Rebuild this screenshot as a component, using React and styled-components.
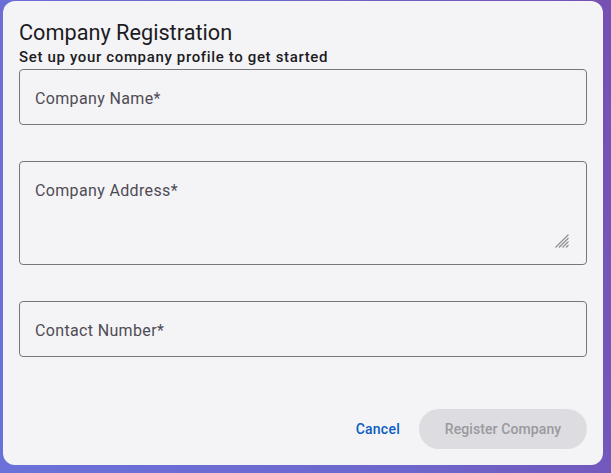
import React from "react";
import styled, { createGlobalStyle } from "styled-components";

const GlobalStyle = createGlobalStyle`
  html, body {
    margin: 0;
    padding: 0;
    height: 100%;
  }
  body {
    background: linear-gradient(75deg, #6a72da 0%, #6d66cc 55%, #7650b2 100%);
    font-family: Roboto, "Noto Sans", Arial, sans-serif;
    overflow: hidden;
  }
`;

const Page = styled.div`
  width: 611px;
  height: 473px;
  padding: 1px 0 0 3px;
  box-sizing: border-box;
`;

const Card = styled.form`
  width: 600px;
  height: 464px;
  box-sizing: border-box;
  background: #f4f4f6;
  border-radius: 12px;
  padding: 18px 16px 16px 16px;
  display: flex;
  flex-direction: column;
`;

const Title = styled.h1`
  margin: 0;
  font-size: 21.7px;
  line-height: 28px;
  font-weight: 400;
  color: #1c1b1f;
`;

const Subtitle = styled.p`
  margin: 0;
  font-size: 15px;
  line-height: 20px;
  font-weight: 500;
  letter-spacing: 0.65px;
  color: #1c1b1f;
`;

const Fields = styled.div`
  margin-top: 2px;
  display: flex;
  flex-direction: column;
  gap: 36px;
`;

const Field = styled.div`
  position: relative;
  height: ${(p) => (p.$tall ? "104px" : "56px")};
  border: 1px solid #79747e;
  border-radius: 4px;
  box-sizing: border-box;
  display: flex;
  align-items: ${(p) => (p.$tall ? "flex-start" : "center")};
  padding: ${(p) => (p.$tall ? "17px 15px 0" : "3px 15px 0")};
`;

const Label = styled.span`
  font-size: 16px;
  line-height: 24px;
  letter-spacing: 0.35px;
  color: #4f4b55;
`;

const Grip = styled.svg`
  position: absolute;
  right: 17px;
  bottom: 16px;
  width: 14px;
  height: 14px;
`;

const Actions = styled.div`
  margin-top: auto;
  display: flex;
  justify-content: flex-end;
  align-items: center;
  gap: 7px;
`;

const TextButton = styled.button`
  height: 40px;
  padding: 0 12px;
  border: none;
  background: transparent;
  border-radius: 20px;
  font-family: inherit;
  font-size: 14px;
  font-weight: 500;
  letter-spacing: 0.25px;
  color: #0b5cc2;
  cursor: pointer;
`;

const FilledButton = styled.button`
  height: 40px;
  width: 168px;
  padding: 0 24px;
  border: none;
  border-radius: 20px;
  background: #dddce0;
  font-family: inherit;
  font-size: 14px;
  font-weight: 500;
  letter-spacing: 0.1px;
  color: #9a999e;
`;

function ResizeGrip() {
  return (
    <Grip viewBox="0 0 14 14" fill="none" stroke="#8c8b90" strokeWidth="1.1">
      <line x1="0.5" y1="13.5" x2="13.5" y2="0.5" />
      <line x1="4" y1="13.5" x2="13.5" y2="4" />
      <line x1="7.5" y1="13.5" x2="13.5" y2="7.5" />
      <line x1="11" y1="13.5" x2="13.5" y2="11" />
    </Grip>
  );
}

export default function App() {
  return (
    <>
      <GlobalStyle />
      <Page>
        <Card onSubmit={(e) => e.preventDefault()}>
          <Title>Company Registration</Title>
          <Subtitle>Set up your company profile to get started</Subtitle>
          <Fields>
            <Field>
              <Label>Company Name*</Label>
            </Field>
            <Field $tall>
              <Label>Company Address*</Label>
              <ResizeGrip />
            </Field>
            <Field>
              <Label>Contact Number*</Label>
            </Field>
          </Fields>
          <Actions>
            <TextButton type="button">Cancel</TextButton>
            <FilledButton type="submit" disabled>
              Register Company
            </FilledButton>
          </Actions>
        </Card>
      </Page>
    </>
  );
}
